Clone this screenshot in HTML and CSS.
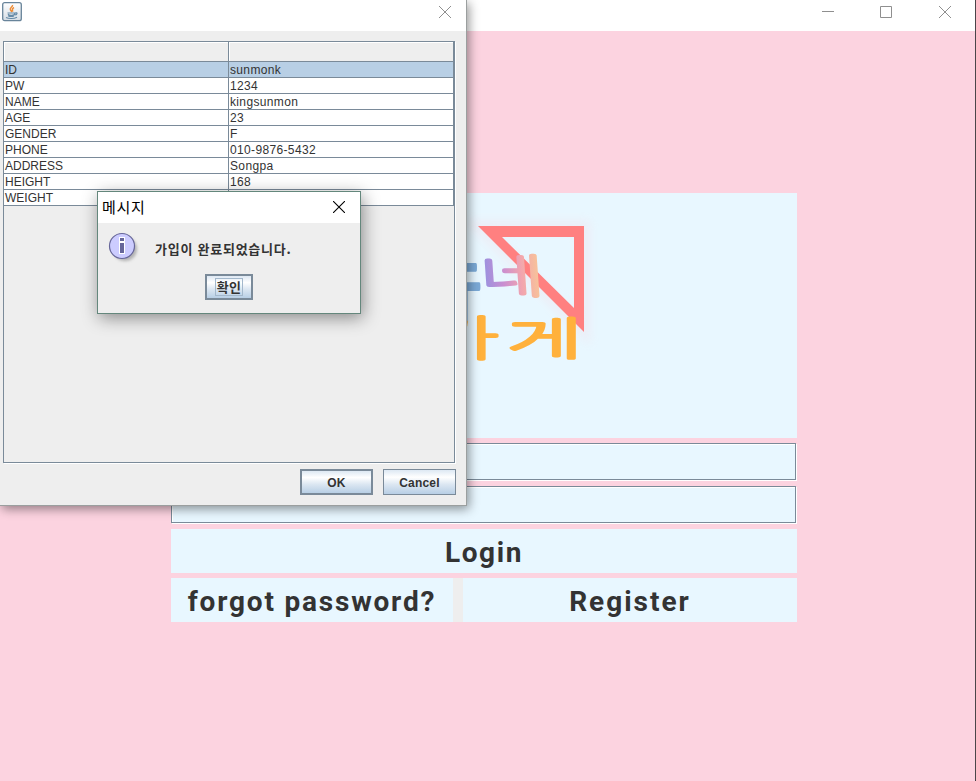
FILE: index.html
```html
<!DOCTYPE html>
<html lang="ko">
<head>
<meta charset="utf-8">
<title>Login</title>
<link rel="stylesheet" href="styles.css">
</head>
<body>
<main class="main-window">
  <header class="titlebar main-titlebar">
    <svg class="controls" width="140" height="24" viewBox="0 0 140 24"><g fill="none" stroke="#8f8f8f"><path d="M7 11.5h12M65.500 6.500h11v11h-11z"/><path d="M124 6l12 12M136 6l-12 12"/></g></svg>
  </header>
  <section class="login">
    <div class="logo-panel">
      <svg width="626" height="245" viewBox="171 193 626 245">
        <defs>
          <linearGradient id="pastel" x1="0" x2="1"><stop stop-color="#9292e2"/><stop offset=".35" stop-color="#c98ed1"/><stop offset=".65" stop-color="#f2a5ae"/><stop offset="1" stop-color="#f9cb94"/></linearGradient>
          <filter id="haze" x="-20%" y="-20%" width="140%" height="140%"><feGaussianBlur stdDeviation="5"/></filter>
        </defs>
        <path d="M479 226.500H584V331Z" fill="none" stroke="#f5dce5" stroke-width="12" opacity=".35" filter="url(#haze)"/>
        <path fill="#ff8080" fill-rule="evenodd" d="M478 226H584V332ZM502 237L574 308V237Z"/>
        <g class="lettering">
          <text class="blue" transform="translate(451 314) scale(.5 1.46)" font-size="66">누</text>
          <text class="gradient" transform="translate(482 293) skewX(4) scale(1.34 .9)" font-size="51">네</text>
          <text class="orange" transform="translate(424 355) scale(1.5 .86)" font-size="54">가</text>
          <text class="orange" transform="translate(507 355) scale(1.58 .86)" font-size="52">게</text>
        </g>
      </svg>
    </div>
    <div class="field"></div>
    <div class="field"></div>
    <div class="action sign-in">Login</div>
    <div class="action-row"><div class="action forgot">forgot password?</div><div class="action register">Register</div></div>
  </section>
</main>

<section class="info-window">
  <header class="titlebar info-titlebar">
    <svg class="java" width="20" height="20" viewBox="0 0 20 20">
      <defs><linearGradient id="tile" x1="0" y1="0" x2="0" y2="1"><stop stop-color="#fff"/><stop offset="1" stop-color="#d5dde4"/></linearGradient></defs>
      <rect x=".7" y=".7" width="18.600" height="18" rx="2" fill="url(#tile)" stroke="#68849a" stroke-width="1.300"/>
      <path d="M10.500 3C11 5 7 6 8.500 8l1.500 2M12 5.500c-3 1.500-1 2.500-1.500 4" fill="none" stroke="#ee8c35" stroke-width="1.500"/>
      <path d="M5.500 11h7.500c0 3-6 3-7 1M13 11c3-1 2.500 2-.5 2M4 15.500c3 1.500 8 1.300 11-.3M6 13.700c2 1 4 1 6 .3" fill="none" stroke="#668ba7" stroke-width="1.200"/>
    </svg>
    <svg class="close" width="12" height="12" viewBox="0 0 12 12"><path d="M0 0l12 12M12 0L0 12" stroke="#8f8f8f"/></svg>
  </header>
  <div class="info-body">
    <div class="pane">
      <div class="row head"><span></span><span></span></div>
      <div class="row selected"><span>ID</span><span>sunmonk</span></div>
      <div class="row"><span>PW</span><span>1234</span></div>
      <div class="row"><span>NAME</span><span>kingsunmon</span></div>
      <div class="row"><span>AGE</span><span>23</span></div>
      <div class="row"><span>GENDER</span><span>F</span></div>
      <div class="row"><span>PHONE</span><span>010-9876-5432</span></div>
      <div class="row"><span>ADDRESS</span><span>Songpa</span></div>
      <div class="row"><span>HEIGHT</span><span>168</span></div>
      <div class="row"><span>WEIGHT</span><span></span></div>
    </div>
    <div class="buttons"><div class="btn default">OK</div><div class="btn">Cancel</div></div>
  </div>
</section>

<section class="message-window">
  <header class="titlebar message-titlebar"><span>메시지</span><svg width="12" height="12" viewBox="0 0 12 12"><path d="M0 0l12 12M12 0L0 12" stroke="#000" stroke-width="1.100"/></svg></header>
  <div class="message">
    <svg width="34" height="34" viewBox="0 0 34 34">
      <defs><filter id="soft"><feGaussianBlur stdDeviation="1.500"/></filter></defs>
      <circle cx="17" cy="17" r="12" fill="#999" opacity=".7" filter="url(#soft)"/>
      <circle cx="14" cy="14" r="12.500" fill="#ccf" stroke="#669" stroke-width="1.200"/>
      <path d="M11 5h6v17h-6z" fill="#fff"/><path d="M12 6h4v3h-4zM12 11h4v10h-4z" fill="#669"/>
    </svg>
    <span>가입이 완료되었습니다.</span>
  </div>
  <div class="btn default confirm"><span>확인</span></div>
</section>
</body>
</html>
```
FILE: styles.css
```css
* { box-sizing: border-box; }
body { margin: 0; width: 976px; height: 781px; overflow: hidden; position: relative; font-family: "Liberation Sans", "Noto Sans CJK KR", sans-serif; color: #333; }
svg { display: block; flex: none; }
.titlebar { display: flex; background: #fff; }
.main-window { width: 976px; height: 781px; background: #fcd3e0; border-right: 1px solid #4b4549; }
.main-titlebar { height: 31px; justify-content: flex-end; padding-right: 20px; margin-bottom: 162px; }
.login { width: 626px; margin-left: 171px; }
.logo-panel { height: 245px; background: #e8f7ff; margin-bottom: 5px; }
.lettering { font-family: "Noto Sans CJK KR", sans-serif; font-weight: 100; stroke-width: 4px; stroke-linejoin: round; }
.blue { fill: #7ba9d6; stroke: #7ba9d6; }
.gradient { fill: url(#pastel); stroke: url(#pastel); }
.orange { fill: #ffb13c; stroke: #ffb13c; }
.field { width: 625px; height: 37px; margin-bottom: 6px; background: #e8f7ff; border: 1px solid #7a8a99; box-shadow: 1px 1px #fff, inset 1px 1px #fff; }
.action { height: 44px; background: #e8f7ff; font: 700 28px/47px Roboto, sans-serif; text-align: center; white-space: nowrap; }
.sign-in { margin-bottom: 5px; letter-spacing: 1.6px; }
.action-row { display: flex; justify-content: space-between; background: #eee; }
.forgot { width: 282px; letter-spacing: 1.8px; }
.register { width: 334px; letter-spacing: 2px; }

.info-window { position: absolute; left: 0; top: 0; width: 467px; height: 506px; background: #eee; border-right: 1px solid #9b9f9f; border-bottom: 1px solid #9b9f9f; box-shadow: 2px 3px 10px rgba(0,0,0,.42); }
.info-titlebar { height: 31px; justify-content: space-between; padding: 2px 15px 0 2px; }
.close { margin-top: 4px; }
.info-body { padding: 10px 11px 0 3px; }
.pane { width: 452px; height: 422px; border: 1px solid #7a8a99; box-shadow: 1px 1px #fff; }
.row { display: grid; grid-template-columns: 225px 225px; height: 16px; font-size: 12px; line-height: 17px; background: #fff; }
.row span { height: 16px; padding-left: 1px; border-right: 1px solid #7a8a99; border-bottom: 1px solid #7a8a99; }
.row span:last-child { letter-spacing: .35px; }
.row.head { height: 20px; background: #eee; }
.row.head span { height: 20px; box-shadow: inset 1px 1px #fff; }
.row.selected { background: #b8cfe5; }
.buttons { display: flex; justify-content: flex-end; gap: 10px; margin-top: 6px; margin-right: -1px; }
.btn { width: 73px; height: 26px; border: 1px solid #7a8a99; background: linear-gradient(#dde8f3 0%, #fff 30%, #dce7f2 60%, #b8cfe5 100%); font-size: 12px; font-weight: 700; line-height: 26px; text-align: center; letter-spacing: .2px; }
.default { border-width: 2px; line-height: 24px; }

.message-window { position: absolute; left: 97px; top: 191px; width: 264px; height: 123px; background: #eee; border: 1px solid #64877c; box-shadow: 2px 4px 16px rgba(0,0,0,.42); }
.message-titlebar { height: 31px; align-items: center; justify-content: space-between; padding: 0 15px 1px 4px; color: #000; font: 400 15px/28px "Noto Sans CJK KR", sans-serif; letter-spacing: .7px; }
.message { display: flex; height: 51px; padding: 9px 0 0 10px; font: 700 13px/34px "Noto Sans CJK KR", sans-serif; letter-spacing: .75px; white-space: nowrap; }
.message span { margin-left: 13px; }
.confirm { display: flex; justify-content: center; align-items: center; width: 48px; margin-left: 107px; font-family: "Noto Sans CJK KR", sans-serif; font-size: 13px; }
.confirm span { width: 28px; height: 18px; line-height: 16px; border: 1px solid #a3b8cc; }
```
